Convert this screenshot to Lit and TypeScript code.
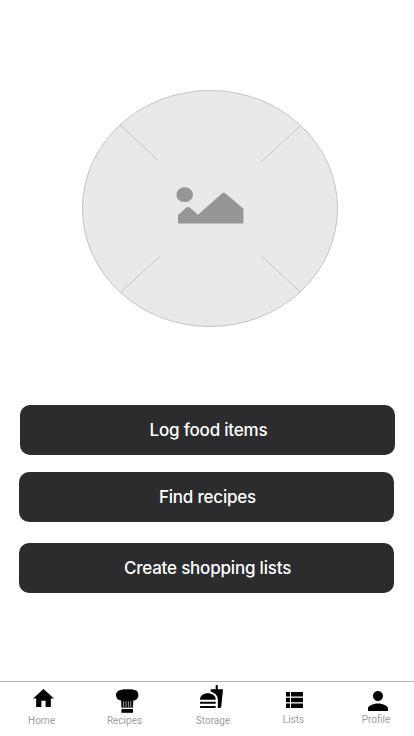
import { LitElement, html, css } from "lit";
import { customElement, property } from "lit/decorators.js";

const icons: Record<string, unknown> = {
  home: html`<svg width="21" height="18" viewBox="2 3 20 17" preserveAspectRatio="none"><path d="M10 20v-6h4v6h5v-8h3L12 3 2 12h3v8z"/></svg>`,
  recipes: html`<svg width="23" height="24" viewBox="0 0 23 24">
    <path d="M5.6 .9C7 .1 8.4 .2 9.3 .6C10.8 .1 12.4 .1 13.8 .6C15 .1 16.6 .2 17.8 .9C20.8 .8 22.4 3.1 22.4 5.8C22.4 9 20.7 11.3 17.6 11.4H5.2C2.1 11.2 0 8.9 0 5.9C0 3 2.4 .8 5.6 .9Z"/>
    <path d="M5 10H17.4L16.9 18.8H5.5z"/>
    <path d="M7.6 12.2V18.8M10 12.2V18.8M12.4 12.2V18.8M14.8 12.2V18.8" stroke="#fff" stroke-width=".6"/>
    <path d="M5.4 20H17V23.8H5.4z"/></svg>`,
  storage: html`<svg width="23" height="23" viewBox="1 1 22 22"><path d="M18.06 22.99h1.66c.84 0 1.53-.64 1.63-1.46L23 5.05h-5V1h-1.97v4.05h-4.97l.3 2.34c1.71.47 3.31 1.32 4.27 2.26 1.44 1.42 2.43 2.89 2.43 5.29v8.05zM1 21.99V21h15.03v.99c0 .55-.45 1-1.01 1H2.01c-.56 0-1.01-.45-1.01-1zm15.03-7c0-8-15.03-8-15.03 0h15.03zM1.02 17h15v2h-15z"/></svg>`,
  lists: html`<svg width="17" height="16" viewBox="4 5 17 14" preserveAspectRatio="none"><path d="M4 14h4v-4H4v4zm0 5h4v-4H4v4zM4 9h4V5H4v4zm5 5h12v-4H9v4zm0 5h12v-4H9v4zM9 5v4h12V5H9z"/></svg>`,
  profile: html`<svg width="20" height="20" viewBox="4 4 16 16"><path d="M12 12c2.21 0 4-1.79 4-4s-1.79-4-4-4-4 1.79-4 4 1.79 4 4 4zm0 2c-2.67 0-8 1.34-8 4v2h16v-2c0-2.66-5.33-4-8-4z"/></svg>`,
};

@customElement("nav-item")
class NavItem extends LitElement {
  @property() icon = "home";
  @property() label = "";
  static styles = css`
    :host { display: flex; flex-direction: column; align-items: center; }
    .icon { height: 30px; display: flex; justify-content: center; align-items: flex-start; box-sizing: border-box; }
    .home { padding: 7px 0 0 4px; }
    .recipes { padding: 7px 0 0 5px; }
    .storage { padding: 3px 3px 0 0; }
    .lists { padding: 10px 0 0 2px; }
    .profile { padding: 9px 0 0 3px; }
    svg { display: block; flex: none; }
    .label { font: 400 10px/18px Roboto, sans-serif; color: #a0a0a0; white-space: nowrap; }
    .raised { margin-top: -1px; }
  `;
  render() {
    const raised = this.icon === "lists" || this.icon === "profile";
    return html`<div class="icon ${this.icon}">${icons[this.icon]}</div>
      <div class="label ${raised ? "raised" : ""}">${this.label}</div>`;
  }
}

@customElement("app-root")
class AppRoot extends LitElement {
  static styles = css`
    :host { display: flex; flex-direction: column; width: 414px; height: 736px; background: #fff; overflow: hidden; }
    .hero { box-sizing: border-box; flex: none; height: 405px; padding: 90px 0 0 82px; }
    .hero svg { display: block; }
    .actions { display: flex; flex-direction: column; padding-left: 19px; flex: 1; }
    button { width: 375px; height: 50px; border: 0; border-radius: 10px; background: #2c2c2e; color: #fff;
      font: 550 17px/22px Inter, sans-serif; letter-spacing: -0.2px; padding: 0 0 0 2px; text-align: center; }
    .log { margin-left: 1px; }
    .find { margin-top: 17px; }
    .create { margin-top: 21px; }
    nav { box-sizing: border-box; height: 55px; border-top: 1px solid #b3b3b3; display: grid;
      grid-template-columns: 83px 83px 94px 67px 87px; }
    .last { padding-left: 11px; }
  `;
  render() {
    return html`
      <div class="hero">
        <svg width="256" height="237" viewBox="0 0 256 237">
          <ellipse cx="128" cy="118.5" rx="127.5" ry="118" fill="#e9e9e9" stroke="#c4c4c4"/>
          <path d="M38 35L77 71M218.5 35.5L179.5 71.5M38.5 202.5L78 166M218.5 202L179.5 166" fill="none" stroke="#c4c4c4"/>
          <ellipse cx="102.7" cy="104.7" rx="8.3" ry="7.4" fill="#969696"/>
          <path d="M96 133.5V125L104.3 117.6Q106 116.3 107.7 117.6L116 124.8L140.2 103.3Q141.8 102 143.4 103.3L161.4 118.8V133.5Z" fill="#969696"/>
        </svg>
      </div>
      <div class="actions">
        <button class="log">Log food items</button>
        <button class="find">Find recipes</button>
        <button class="create">Create shopping lists</button>
      </div>
      <nav>
        <nav-item icon="home" label="Home"></nav-item>
        <nav-item icon="recipes" label="Recipes"></nav-item>
        <nav-item icon="storage" label="Storage"></nav-item>
        <nav-item icon="lists" label="Lists"></nav-item>
        <nav-item class="last" icon="profile" label="Profile"></nav-item>
      </nav>`;
  }
}
